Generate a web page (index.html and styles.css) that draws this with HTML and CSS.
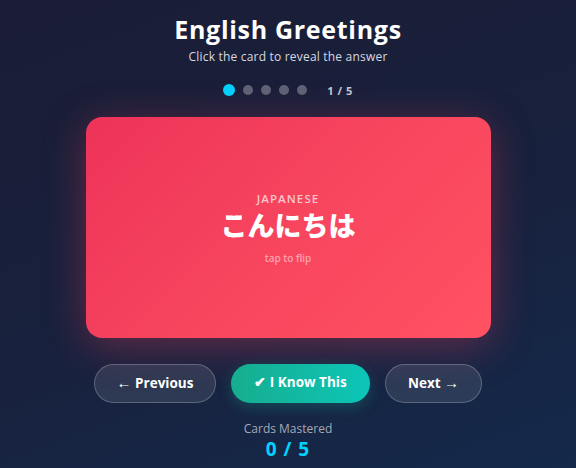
FILE: index.html
```html
<!DOCTYPE html>
<html>
<head>
<meta charset="utf-8">
<title>English Greetings</title>
<link rel="stylesheet" href="styles.css">
</head>
<body>
<div class="app">
  <h1 class="title">English Greetings</h1>
  <p class="subtitle">Click the card to reveal the answer</p>
  <div class="progress">
    <div class="dots">
      <span class="dot active"></span>
      <span class="dot"></span>
      <span class="dot"></span>
      <span class="dot"></span>
      <span class="dot"></span>
    </div>
    <span class="counter">1 / 5</span>
  </div>
  <div class="card">
    <div class="lang">JAPANESE</div>
    <div class="word">こんにちは</div>
    <div class="hint">tap to flip</div>
  </div>
  <div class="controls">
    <button class="btn btn-nav btn-prev"><span class="arrow">&larr;</span> Previous</button>
    <button class="btn btn-know">&#10004; I Know This</button>
    <button class="btn btn-nav btn-next">Next <span class="arrow">&rarr;</span></button>
  </div>
  <div class="score">
    <div class="score-label">Cards Mastered</div>
    <div class="score-value">0 / 5</div>
  </div>
</div>
</body>
</html>
```

FILE: styles.css
```css
html, body
{
	margin:0;
	padding:0;
	height:100%;
}
body
{
	background:linear-gradient(160deg, #1b1d36 0%, #18213d 55%, #14294b 100%);
	font-family:"Open Sans", "Noto Sans CJK JP", sans-serif;
	color:#fff;
	overflow:hidden;
}
.app
{
	display:flex;
	flex-direction:column;
	align-items:center;
	padding-top:14px;
}
.title
{
	margin:0;
	font-size:25px;
	line-height:30px;
	font-weight:700;
	letter-spacing:0.7px;
}
.subtitle
{
	margin:6px 0 0 0;
	font-size:12px;
	line-height:14px;
	color:#d6d8e0;
	letter-spacing:0.2px;
}
.progress
{
	display:flex;
	align-items:center;
	margin-top:19px;
	height:14px;
}
.dots
{
	display:flex;
	align-items:center;
	gap:8px;
}
.dot
{
	width:10px;
	height:10px;
	border-radius:50%;
	background:rgba(255,255,255,0.3);
}
.dot.active
{
	width:12px;
	height:12px;
	background:#00d2ff;
}
.counter
{
	margin-left:20px;
	font-size:11px;
	font-weight:700;
	color:#c4c7d0;
	letter-spacing:0.5px;
}
.card
{
	margin-top:20px;
	width:405px;
	height:221px;
	border-radius:16px;
	background:linear-gradient(135deg, #ee3359 0%, #f7455e 50%, #ff5262 100%);
	box-shadow:0 8px 40px rgba(240,60,90,0.35);
	display:flex;
	flex-direction:column;
	align-items:center;
	justify-content:center;
	cursor:pointer;
}
.lang
{
	font-size:11.5px;
	line-height:16px;
	font-weight:600;
	letter-spacing:1.1px;
	color:rgba(255,255,255,0.7);
}
.word
{
	margin-top:2px;
	font-family:"Noto Sans CJK JP", sans-serif;
	font-size:27px;
	font-weight:900;
	line-height:32px;
}
.hint
{
	margin-top:10px;
	font-size:10px;
	line-height:14px;
	font-weight:600;
	color:rgba(255,255,255,0.5);
}
.controls
{
	display:flex;
	gap:15px;
	margin-top:26px;
}
.btn
{
	height:39px;
	border-radius:20px;
	font-family:"Open Sans", sans-serif;
	font-size:13.5px;
	font-weight:700;
	color:#fff;
	cursor:pointer;
	padding:0 0 3px 0;
}
.arrow
{
	font-size:15px;
}
.btn-nav
{
	background:rgba(255,255,255,0.1);
	border:1.5px solid rgba(255,255,255,0.22);
}
.btn-prev
{
	width:122px;
}
.btn-next
{
	width:97px;
}
.btn-know
{
	width:139px;
	border:none;
	background:linear-gradient(90deg, #17ad8e 0%, #0cc6b8 100%);
	box-shadow:0 4px 14px rgba(17,190,160,0.25);
}
.score
{
	margin-top:19px;
	text-align:center;
}
.score-label
{
	font-size:12px;
	line-height:14px;
	color:#a3a9b8;
}
.score-value
{
	margin-top:1px;
	font-size:19px;
	line-height:24px;
	font-weight:700;
	color:#00d2ff;
	letter-spacing:1px;
}
```
